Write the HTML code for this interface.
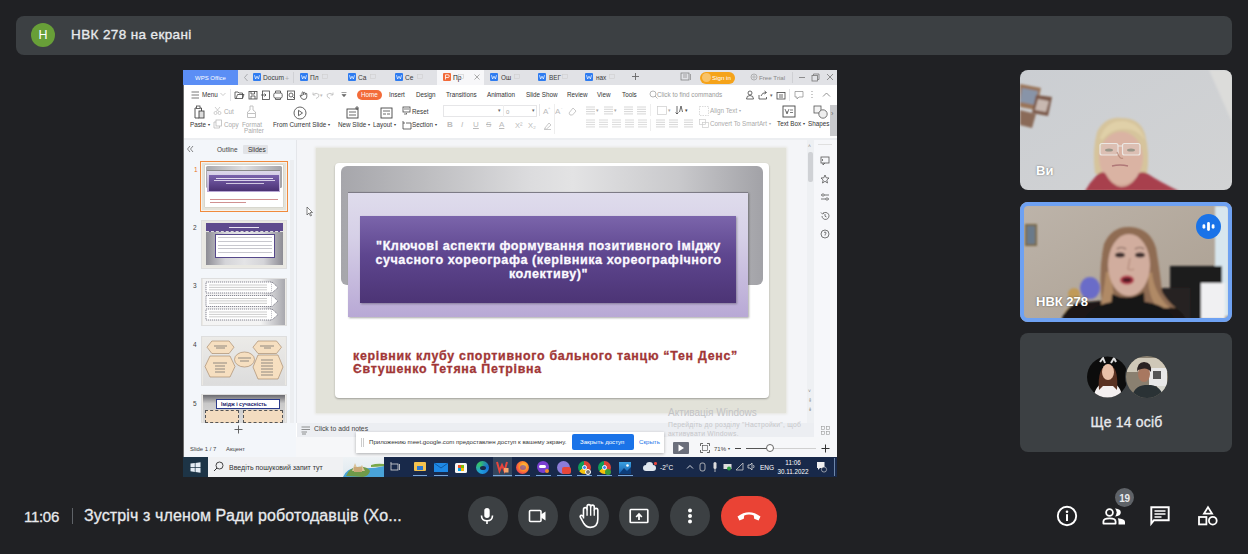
<!DOCTYPE html>
<html><head><meta charset="utf-8">
<style>
*{margin:0;padding:0;box-sizing:border-box}
html,body{width:1248px;height:554px;overflow:hidden;background:#202124;font-family:"Liberation Sans",sans-serif;position:relative}
.a{position:absolute}
.t{white-space:nowrap;line-height:1}
svg.a{overflow:visible}
</style></head><body>
<div class="a" style="left:16px;top:16px;width:1216px;height:39px;background:#3c4043;border-radius:8px"></div>
<div class="a" style="left:31px;top:23px;width:24px;height:24px;background:#689f38;border-radius:50%"></div>
<div class="a t" style="left:-157px;width:400px;text-align:center;top:29.33px;font-size:12.5px;color:#fff;font-weight:normal;">Н</div>
<div class="a t" style="left:71px;top:28.09px;font-size:13.5px;color:#e8eaed;font-weight:normal;font-family:'Liberation Sans',sans-serif;letter-spacing:0.38px;-webkit-text-stroke:0.35px #e8eaed">НВК 278 на екрані</div>
<div class="a" style="left:183px;top:70px;width:654px;height:407px;background:#ffffff;overflow:hidden"></div>
<div class="a" style="left:183px;top:70px;width:654px;height:15px;background:#e1e2e6"></div>
<div class="a" style="left:183px;top:70px;width:55px;height:15px;background:#5b8ef5"></div>
<div class="a t" style="left:195px;top:75.02px;font-size:6px;color:#fff;font-weight:normal;font-family:'Liberation Sans',sans-serif;">WPS Office</div>
<svg class="a" style="left:243px;top:73px;" width="6" height="9" viewBox="0 0 6 9"><path d="M4.5 1 L1.5 4.5 L4.5 8" stroke="#9a9ca0" stroke-width="0.8" fill="none"/></svg>
<div class="a" style="left:253px;top:73px;width:8px;height:8px;background:#2f7cf0;border-radius:1px"></div>
<svg class="a" style="left:253px;top:73px;" width="8" height="8" viewBox="0 0 8 8"><path d="M1.5 2.2 L2.6 6 L4 3.2 L5.4 6 L6.5 2.2" stroke="#fff" stroke-width="0.7" fill="none"/></svg>
<div class="a t" style="left:263px;top:74.82px;font-size:6.6px;color:#3a3a3a;font-weight:normal;font-family:'Liberation Sans',sans-serif;">Docum</div>
<div class="a" style="left:300px;top:73px;width:8px;height:8px;background:#2f7cf0;border-radius:1px"></div>
<svg class="a" style="left:300px;top:73px;" width="8" height="8" viewBox="0 0 8 8"><path d="M1.5 2.2 L2.6 6 L4 3.2 L5.4 6 L6.5 2.2" stroke="#fff" stroke-width="0.7" fill="none"/></svg>
<div class="a t" style="left:310px;top:74.82px;font-size:6.6px;color:#3a3a3a;font-weight:normal;font-family:'Liberation Sans',sans-serif;">Пл</div>
<svg class="a" style="left:322px;top:74px;" width="7" height="7" viewBox="0 0 7 7"><rect x="0.5" y="0.5" width="5" height="4" fill="none" stroke="#cfcfcf" stroke-width="0.6"/></svg>
<div class="a" style="left:348px;top:73px;width:8px;height:8px;background:#2f7cf0;border-radius:1px"></div>
<svg class="a" style="left:348px;top:73px;" width="8" height="8" viewBox="0 0 8 8"><path d="M1.5 2.2 L2.6 6 L4 3.2 L5.4 6 L6.5 2.2" stroke="#fff" stroke-width="0.7" fill="none"/></svg>
<div class="a t" style="left:358px;top:74.82px;font-size:6.6px;color:#3a3a3a;font-weight:normal;font-family:'Liberation Sans',sans-serif;">Са</div>
<svg class="a" style="left:370px;top:74px;" width="7" height="7" viewBox="0 0 7 7"><rect x="0.5" y="0.5" width="5" height="4" fill="none" stroke="#cfcfcf" stroke-width="0.6"/></svg>
<div class="a" style="left:395px;top:73px;width:8px;height:8px;background:#2f7cf0;border-radius:1px"></div>
<svg class="a" style="left:395px;top:73px;" width="8" height="8" viewBox="0 0 8 8"><path d="M1.5 2.2 L2.6 6 L4 3.2 L5.4 6 L6.5 2.2" stroke="#fff" stroke-width="0.7" fill="none"/></svg>
<div class="a t" style="left:405px;top:74.82px;font-size:6.6px;color:#3a3a3a;font-weight:normal;font-family:'Liberation Sans',sans-serif;">Се</div>
<svg class="a" style="left:417px;top:74px;" width="7" height="7" viewBox="0 0 7 7"><rect x="0.5" y="0.5" width="5" height="4" fill="none" stroke="#cfcfcf" stroke-width="0.6"/></svg>
<div class="a" style="left:293px;top:72px;width:1px;height:11px;background:#d0d1d5"></div>
<div class="a t" style="left:285px;top:74.69px;font-size:7px;color:#aaa;font-weight:normal;font-family:'Liberation Sans',sans-serif;">+</div>
<div class="a" style="left:437px;top:70px;width:47px;height:15px;background:#f7f7f9"></div>
<div class="a" style="left:443px;top:73px;width:8px;height:8px;background:#f26b3a;border-radius:1px"></div>
<svg class="a" style="left:443px;top:73px;" width="8" height="8" viewBox="0 0 8 8"><path d="M2.5 6.5 V1.8 H5 Q6.3 1.8 6.3 3.2 Q6.3 4.5 5 4.5 H2.5" stroke="#fff" stroke-width="0.8" fill="none"/></svg>
<div class="a t" style="left:453px;top:74.82px;font-size:6.6px;color:#222;font-weight:normal;font-family:'Liberation Sans',sans-serif;">Пр</div>
<svg class="a" style="left:458px;top:74px;" width="7" height="7" viewBox="0 0 7 7"><rect x="0.5" y="0.5" width="5" height="4" fill="none" stroke="#ccc" stroke-width="0.6"/></svg>
<svg class="a" style="left:473px;top:73px;" width="8" height="8" viewBox="0 0 8 8"><path d="M1.5 1.5 L6.5 6.5 M6.5 1.5 L1.5 6.5" stroke="#888" stroke-width="0.7"/></svg>
<div class="a" style="left:490px;top:73px;width:8px;height:8px;background:#2f7cf0;border-radius:1px"></div>
<svg class="a" style="left:490px;top:73px;" width="8" height="8" viewBox="0 0 8 8"><path d="M1.5 2.2 L2.6 6 L4 3.2 L5.4 6 L6.5 2.2" stroke="#fff" stroke-width="0.7" fill="none"/></svg>
<div class="a t" style="left:501px;top:74.99px;font-size:6.4px;color:#3a3a3a;font-weight:normal;font-family:'Liberation Sans',sans-serif;">Ош</div>
<svg class="a" style="left:514px;top:74px;" width="7" height="7" viewBox="0 0 7 7"><rect x="0.5" y="0.5" width="5" height="4" fill="none" stroke="#cfcfcf" stroke-width="0.6"/></svg>
<div class="a" style="left:538px;top:73px;width:8px;height:8px;background:#2f7cf0;border-radius:1px"></div>
<svg class="a" style="left:538px;top:73px;" width="8" height="8" viewBox="0 0 8 8"><path d="M1.5 2.2 L2.6 6 L4 3.2 L5.4 6 L6.5 2.2" stroke="#fff" stroke-width="0.7" fill="none"/></svg>
<div class="a t" style="left:549px;top:74.99px;font-size:6.4px;color:#3a3a3a;font-weight:normal;font-family:'Liberation Sans',sans-serif;">ВЕГ</div>
<svg class="a" style="left:562px;top:74px;" width="7" height="7" viewBox="0 0 7 7"><rect x="0.5" y="0.5" width="5" height="4" fill="none" stroke="#cfcfcf" stroke-width="0.6"/></svg>
<div class="a" style="left:585px;top:73px;width:8px;height:8px;background:#2f7cf0;border-radius:1px"></div>
<svg class="a" style="left:585px;top:73px;" width="8" height="8" viewBox="0 0 8 8"><path d="M1.5 2.2 L2.6 6 L4 3.2 L5.4 6 L6.5 2.2" stroke="#fff" stroke-width="0.7" fill="none"/></svg>
<div class="a t" style="left:596px;top:74.99px;font-size:6.4px;color:#3a3a3a;font-weight:normal;font-family:'Liberation Sans',sans-serif;">нах</div>
<svg class="a" style="left:609px;top:74px;" width="7" height="7" viewBox="0 0 7 7"><rect x="0.5" y="0.5" width="5" height="4" fill="none" stroke="#cfcfcf" stroke-width="0.6"/></svg>
<svg class="a" style="left:631px;top:72px;" width="9" height="9" viewBox="0 0 9 9"><path d="M4.5 1 V8 M1 4.5 H8" stroke="#666" stroke-width="0.9"/></svg>
<svg class="a" style="left:680px;top:72px;" width="12" height="10" viewBox="0 0 12 10"><rect x="1" y="1" width="8" height="7" fill="none" stroke="#777" stroke-width="0.7"/><path d="M3 3h4M3 5h4M10.5 2v6" stroke="#777" stroke-width="0.6"/></svg>
<div class="a" style="left:700px;top:71.5px;width:35px;height:12px;background:#f5a31a;border-radius:6px"></div>
<div class="a" style="left:702px;top:73px;width:9px;height:9px;background:#f8c36a;border-radius:50%"></div>
<div class="a t" style="left:712px;top:75.35px;font-size:6.2px;color:#fff;font-weight:normal;font-family:'Liberation Sans',sans-serif;">Sign in</div>
<svg class="a" style="left:750px;top:73px;" width="8" height="8" viewBox="0 0 8 8"><circle cx="4" cy="4" r="3" fill="none" stroke="#999" stroke-width="0.7"/><circle cx="4" cy="4" r="1.2" fill="none" stroke="#999" stroke-width="0.6"/></svg>
<div class="a t" style="left:759px;top:74.85px;font-size:6.2px;color:#888;font-weight:normal;font-family:'Liberation Sans',sans-serif;">Free Trial</div>
<div class="a" style="left:792px;top:72px;width:1px;height:11px;background:#cfd0d4"></div>
<svg class="a" style="left:798px;top:73px;" width="8" height="8" viewBox="0 0 8 8"><path d="M1 4.5 H7" stroke="#777" stroke-width="0.8"/></svg>
<svg class="a" style="left:811px;top:73px;" width="9" height="9" viewBox="0 0 9 9"><rect x="1" y="2.5" width="5.5" height="5.5" fill="none" stroke="#777" stroke-width="0.8"/><path d="M2.5 2.5 V1 H8 V6.5 H6.5" fill="none" stroke="#777" stroke-width="0.8"/></svg>
<svg class="a" style="left:826px;top:73px;" width="8" height="8" viewBox="0 0 8 8"><path d="M1 1 L7 7 M7 1 L1 7" stroke="#777" stroke-width="0.8"/></svg>
<div class="a" style="left:183px;top:85px;width:654px;height:52px;background:#ffffff"></div>
<svg class="a" style="left:191px;top:91px;" width="9" height="8" viewBox="0 0 9 8"><path d="M0.5 1 H8 M0.5 4 H8 M0.5 7 H8" stroke="#555" stroke-width="0.8"/></svg>
<div class="a t" style="left:202px;top:92.27px;font-size:6.3px;color:#333;font-weight:normal;font-family:'Liberation Sans',sans-serif;">Menu</div>
<svg class="a" style="left:220px;top:92px;" width="6" height="5" viewBox="0 0 6 5"><path d="M0.5 1 L3 3.5 L5.5 1" stroke="#aaa" stroke-width="0.6" fill="none"/></svg>
<div class="a" style="left:230px;top:89px;width:1px;height:12px;background:#e4e5e8"></div>
<svg class="a" style="left:234px;top:90px;" width="11" height="10" viewBox="0 0 11 10"><path d="M1 8.5 V2 H4 L5 3 H8.5 V8.5 Z M2 8.5 L3.5 4.5 H10 L8.5 8.5" fill="none" stroke="#444" stroke-width="0.8"/></svg>
<svg class="a" style="left:248px;top:90px;" width="10" height="10" viewBox="0 0 10 10"><rect x="1" y="1.5" width="8" height="7.5" fill="none" stroke="#444" stroke-width="0.8"/><path d="M3 9 V6 H7 V9 M3 1.5 V4 H6.5 V1.5" fill="none" stroke="#444" stroke-width="0.8"/></svg>
<svg class="a" style="left:261px;top:90px;" width="10" height="10" viewBox="0 0 10 10"><rect x="1.5" y="1" width="7" height="8.5" fill="none" stroke="#444" stroke-width="0.8"/><path d="M0 5 H5 M3.5 3.5 L5 5 L3.5 6.5" fill="none" stroke="#444" stroke-width="0.8"/></svg>
<svg class="a" style="left:273px;top:90px;" width="10" height="10" viewBox="0 0 10 10"><rect x="0.8" y="3" width="8.4" height="5" rx="1.5" fill="none" stroke="#444" stroke-width="0.8"/><path d="M2.5 3 V1 H7.5 V3 M2.5 8 V9.5 H7.5 V8" fill="none" stroke="#444" stroke-width="0.8"/></svg>
<svg class="a" style="left:286px;top:90px;" width="10" height="10" viewBox="0 0 10 10"><rect x="1.5" y="1" width="7" height="8.5" fill="none" stroke="#444" stroke-width="0.8"/><circle cx="5" cy="5" r="2" fill="none" stroke="#444" stroke-width="0.8"/><path d="M6.5 6.5 L8.5 8.5" fill="none" stroke="#444" stroke-width="0.8"/></svg>
<svg class="a" style="left:299px;top:89.5px;" width="10" height="11" viewBox="0 0 10 11"><path d="M3 6 V2.5 Q3.8 1.3 4.6 2.5 V5 M4.6 3 Q5.4 1.8 6.2 3 V5 M6.2 3.5 Q7 2.5 7.8 3.7 V7 Q7.5 9.5 5 9.5 Q3 9.5 2 7.5 L1 5.5 Q1.5 4.8 3 6" fill="none" stroke="#444" stroke-width="0.8"/></svg>
<svg class="a" style="left:311px;top:90px;" width="10" height="10" viewBox="0 0 10 10"><path d="M2 4.5 Q5 2 8 4.5 Q8.5 7.5 5 8.5 M2 2.5 V5 H4.5" fill="none" stroke="#bbb" stroke-width="0.8"/></svg>
<div class="a t" style="left:320px;top:92.85px;font-size:5px;color:#bbb;font-weight:normal;font-family:'Liberation Sans',sans-serif;">▾</div>
<svg class="a" style="left:325px;top:90px;" width="10" height="10" viewBox="0 0 10 10"><path d="M8 4.5 Q5 2 2 4.5 Q1.5 7.5 5 8.5 M8 2.5 V5 H5.5" fill="none" stroke="#bbb" stroke-width="0.8"/></svg>
<svg class="a" style="left:340px;top:90px;" width="8" height="10" viewBox="0 0 8 10"><path d="M1.5 2.5 H6.5 M2 4.5 L4 6.8 L6 4.5 Z" fill="#666" stroke="#666" stroke-width="0.6"/></svg>
<div class="a" style="left:357px;top:90px;width:25px;height:10px;background:#f36b39;border-radius:5px"></div>
<div class="a t" style="left:361px;top:92.07px;font-size:6.3px;color:#fff;font-weight:normal;font-family:'Liberation Sans',sans-serif;">Home</div>
<div class="a t" style="left:389px;top:92.07px;font-size:6.3px;color:#333;font-weight:normal;font-family:'Liberation Sans',sans-serif;">Insert</div>
<div class="a t" style="left:416px;top:92.07px;font-size:6.3px;color:#333;font-weight:normal;font-family:'Liberation Sans',sans-serif;">Design</div>
<div class="a t" style="left:446px;top:92.07px;font-size:6.3px;color:#333;font-weight:normal;font-family:'Liberation Sans',sans-serif;">Transitions</div>
<div class="a t" style="left:487px;top:92.07px;font-size:6.3px;color:#333;font-weight:normal;font-family:'Liberation Sans',sans-serif;">Animation</div>
<div class="a t" style="left:526px;top:92.07px;font-size:6.3px;color:#333;font-weight:normal;font-family:'Liberation Sans',sans-serif;">Slide Show</div>
<div class="a t" style="left:567px;top:92.07px;font-size:6.3px;color:#333;font-weight:normal;font-family:'Liberation Sans',sans-serif;">Review</div>
<div class="a t" style="left:597px;top:92.07px;font-size:6.3px;color:#333;font-weight:normal;font-family:'Liberation Sans',sans-serif;">View</div>
<div class="a t" style="left:622px;top:92.07px;font-size:6.3px;color:#333;font-weight:normal;font-family:'Liberation Sans',sans-serif;">Tools</div>
<svg class="a" style="left:649px;top:90px;" width="9" height="9" viewBox="0 0 9 9"><circle cx="4" cy="4" r="3" fill="none" stroke="#999" stroke-width="0.7"/><path d="M6 6 L8.5 8.5" stroke="#999" stroke-width="0.7"/></svg>
<div class="a t" style="left:657px;top:91.77px;font-size:6.3px;color:#999;font-weight:normal;font-family:'Liberation Sans',sans-serif;">Click to find commands</div>
<svg class="a" style="left:745px;top:90px;" width="10" height="10" viewBox="0 0 10 10"><path d="M1.5 9 Q1.5 5.5 5 5.5 Q8.5 5.5 8.5 9 Z" fill="none" stroke="#444" stroke-width="0.8"/><circle cx="5" cy="3" r="2" fill="none" stroke="#444" stroke-width="0.8"/></svg>
<svg class="a" style="left:758px;top:90px;" width="11" height="10" viewBox="0 0 11 10"><path d="M1 5 V9 H8.5 V7 M3 6 Q4 2.5 8 2.5 M6.5 1 L8.5 2.5 L6.5 4" fill="none" stroke="#444" stroke-width="0.8"/></svg>
<div class="a t" style="left:770px;top:92.85px;font-size:5px;color:#666;font-weight:normal;font-family:'Liberation Sans',sans-serif;">▾</div>
<svg class="a" style="left:776px;top:90px;" width="10" height="10" viewBox="0 0 10 10"><rect x="1" y="2.5" width="8" height="6.5" fill="none" stroke="#444" stroke-width="0.8"/><path d="M3 5 H7 M3 7 H7" fill="none" stroke="#444" stroke-width="0.8"/></svg>
<div class="a" style="left:789px;top:89px;width:1px;height:12px;background:#e4e5e8"></div>
<svg class="a" style="left:794px;top:90px;" width="10" height="10" viewBox="0 0 10 10"><path d="M1 1.5 H9 V7 H5 L3 9 V7 H1 Z" fill="none" stroke="#888" stroke-width="0.7"/></svg>
<svg class="a" style="left:810px;top:90px;" width="4" height="10" viewBox="0 0 4 10"><circle cx="2" cy="1.5" r="0.6" fill="#888"/><circle cx="2" cy="4.5" r="0.6" fill="#888"/><circle cx="2" cy="7.5" r="0.6" fill="#888"/></svg>
<svg class="a" style="left:822px;top:90px;" width="10" height="10" viewBox="0 0 10 10"><path d="M1 6.5 L4.5 3 L8 6.5" fill="none" stroke="#777" stroke-width="0.8"/></svg>
<svg class="a" style="left:193px;top:105px;" width="12" height="14" viewBox="0 0 12 14"><path d="M2 3 H3.5 M7 3 H8.5 V6 M2 3 V13 H6" fill="none" stroke="#444" stroke-width="0.9"/><rect x="3.5" y="1" width="3.5" height="2.5" fill="none" stroke="#444" stroke-width="0.8"/><rect x="6" y="6" width="5" height="7" fill="#ddd" stroke="#444" stroke-width="0.9"/></svg>
<div class="a t" style="left:190px;top:122.27px;font-size:6.3px;color:#333;font-weight:normal;font-family:'Liberation Sans',sans-serif;">Paste<span style="font-size:3.8px;vertical-align:1.6px;margin-left:1.6px">▾</span></div>
<svg class="a" style="left:213px;top:106px;" width="9" height="9" viewBox="0 0 9 9"><circle cx="2.5" cy="7" r="1.5" fill="none" stroke="#bbb" stroke-width="0.7"/><circle cx="6.5" cy="7" r="1.5" fill="none" stroke="#bbb" stroke-width="0.7"/><path d="M2 1 L6 5.8 M7 1 L3 5.8" stroke="#bbb" stroke-width="0.7"/></svg>
<div class="a t" style="left:224px;top:109.27px;font-size:6.3px;color:#aaa;font-weight:normal;font-family:'Liberation Sans',sans-serif;">Cut</div>
<svg class="a" style="left:213px;top:119px;" width="10" height="10" viewBox="0 0 10 10"><rect x="3" y="1" width="5.5" height="6" fill="none" stroke="#bbb" stroke-width="0.8"/><path d="M3 3 H1 V9 H6.5 V7" fill="none" stroke="#bbb" stroke-width="0.8"/></svg>
<div class="a t" style="left:224px;top:122.27px;font-size:6.3px;color:#aaa;font-weight:normal;font-family:'Liberation Sans',sans-serif;">Copy</div>
<svg class="a" style="left:246px;top:105px;" width="11" height="14" viewBox="0 0 11 14"><path d="M4 1 H7 V5 L9.5 7 V8.5 H1.5 V7 L4 5 Z M1.5 8.5 V12.5 H9.5 V8.5" fill="none" stroke="#bbb" stroke-width="0.9"/></svg>
<div class="a t" style="left:242px;top:122.27px;font-size:6.3px;color:#aaa;font-weight:normal;font-family:'Liberation Sans',sans-serif;">Format</div>
<div class="a t" style="left:244px;top:128.27px;font-size:6.3px;color:#aaa;font-weight:normal;font-family:'Liberation Sans',sans-serif;">Painter</div>
<svg class="a" style="left:293px;top:106px;" width="14" height="14" viewBox="0 0 14 14"><circle cx="7" cy="7" r="6" fill="none" stroke="#555" stroke-width="0.9"/><path d="M5.5 4.3 V9.7 L9.5 7 Z" fill="none" stroke="#555" stroke-width="0.9"/></svg>
<div class="a t" style="left:273px;top:122.27px;font-size:6.3px;color:#333;font-weight:normal;font-family:'Liberation Sans',sans-serif;">From Current Slide<span style="font-size:3.8px;vertical-align:1.6px;margin-left:1.6px">▾</span></div>
<svg class="a" style="left:346px;top:106px;" width="14" height="14" viewBox="0 0 14 14"><rect x="1" y="3" width="11" height="9" fill="none" stroke="#444" stroke-width="0.9"/><path d="M3 6 H10 M3 9 H10 M11 0 V4 M9 2 H13" stroke="#444" stroke-width="0.8"/></svg>
<div class="a t" style="left:338px;top:122.27px;font-size:6.3px;color:#333;font-weight:normal;font-family:'Liberation Sans',sans-serif;">New Slide<span style="font-size:3.8px;vertical-align:1.6px;margin-left:1.6px">▾</span></div>
<svg class="a" style="left:380px;top:106px;" width="14" height="14" viewBox="0 0 14 14"><rect x="1" y="2" width="11" height="10" fill="none" stroke="#444" stroke-width="0.9"/><path d="M3 5 H10 M3 8 H6 M7 8 H10" stroke="#444" stroke-width="0.8"/></svg>
<div class="a t" style="left:373px;top:122.27px;font-size:6.3px;color:#333;font-weight:normal;font-family:'Liberation Sans',sans-serif;">Layout<span style="font-size:3.8px;vertical-align:1.6px;margin-left:1.6px">▾</span></div>
<svg class="a" style="left:402px;top:106px;" width="9" height="9" viewBox="0 0 9 9"><rect x="1" y="1" width="7" height="5" fill="none" stroke="#444" stroke-width="0.8"/><path d="M2 3 H7 M2 8 H5 L4 7" stroke="#444" stroke-width="0.7" fill="none"/></svg>
<div class="a t" style="left:412px;top:109.27px;font-size:6.3px;color:#333;font-weight:normal;font-family:'Liberation Sans',sans-serif;">Reset</div>
<svg class="a" style="left:402px;top:120px;" width="10" height="10" viewBox="0 0 10 10"><path d="M1 1 V3 H3 M1 3 V9 H9 V3 H4" fill="none" stroke="#444" stroke-width="0.8"/></svg>
<div class="a t" style="left:412px;top:122.27px;font-size:6.3px;color:#333;font-weight:normal;font-family:'Liberation Sans',sans-serif;">Section<span style="font-size:3.8px;vertical-align:1.6px;margin-left:1.6px">▾</span></div>
<div class="a" style="left:443px;top:104.5px;width:94px;height:12px;border:1px solid #e6e6e8;background:#fff"></div>
<div class="a" style="left:503px;top:104.5px;width:1px;height:12px;background:#eee"></div>
<div class="a t" style="left:498px;top:109.27px;font-size:4.5px;color:#666;font-weight:normal;font-family:'Liberation Sans',sans-serif;">▾</div>
<div class="a t" style="left:506px;top:108.52px;font-size:6px;color:#aaa;font-weight:normal;font-family:'Liberation Sans',sans-serif;">0</div>
<div class="a t" style="left:532px;top:109.27px;font-size:4.5px;color:#666;font-weight:normal;font-family:'Liberation Sans',sans-serif;">▾</div>
<div class="a" style="left:539px;top:104px;width:1px;height:12px;background:#e6e6e8"></div>
<div class="a t" style="left:543px;top:107.86px;font-size:8px;color:#bbb;font-weight:normal;font-family:'Liberation Sans',sans-serif;">A</div>
<div class="a t" style="left:548px;top:105.68px;font-size:4px;color:#bbb;font-weight:normal;font-family:'Liberation Sans',sans-serif;">+</div>
<div class="a t" style="left:555px;top:107.86px;font-size:8px;color:#bbb;font-weight:normal;font-family:'Liberation Sans',sans-serif;">A</div>
<div class="a t" style="left:561px;top:105.68px;font-size:4px;color:#bbb;font-weight:normal;font-family:'Liberation Sans',sans-serif;">-</div>
<svg class="a" style="left:567px;top:106px;" width="10" height="10" viewBox="0 0 10 10"><path d="M2 7 L6 2 L9 5 L5.5 9 H3 Z" fill="none" stroke="#bbb" stroke-width="0.8"/></svg>
<div class="a t" style="left:447px;top:121.36px;font-size:8px;color:#bbb;font-weight:normal;font-family:'Liberation Sans',sans-serif;font-weight:bold">B</div>
<div class="a t" style="left:461px;top:121.36px;font-size:8px;color:#bbb;font-weight:normal;font-family:'Liberation Sans',sans-serif;font-style:italic">I</div>
<div class="a t" style="left:473px;top:121.36px;font-size:8px;color:#bbb;font-weight:normal;font-family:'Liberation Sans',sans-serif;text-decoration:underline">U</div>
<div class="a t" style="left:486px;top:121.36px;font-size:8px;color:#bbb;font-weight:normal;font-family:'Liberation Sans',sans-serif;text-decoration:line-through">S</div>
<div class="a t" style="left:499px;top:121.36px;font-size:8px;color:#bbb;font-weight:normal;font-family:'Liberation Sans',sans-serif;text-decoration:underline">A</div>
<div class="a t" style="left:515px;top:121.78px;font-size:7.5px;color:#bbb;font-weight:normal;font-family:'Liberation Sans',sans-serif;">X²</div>
<div class="a t" style="left:528px;top:121.78px;font-size:7.5px;color:#bbb;font-weight:normal;font-family:'Liberation Sans',sans-serif;">X₂</div>
<svg class="a" style="left:543px;top:120px;" width="10" height="10" viewBox="0 0 10 10"><path d="M1.5 8.5 L6 3 L8 5 L3.5 9 Z M1 9.5 H8" fill="none" stroke="#bbb" stroke-width="0.8"/></svg>
<div class="a" style="left:554px;top:104px;width:1px;height:30px;background:#eee"></div>
<svg class="a" style="left:586px;top:106px;" width="9" height="10" viewBox="0 0 9 10"><path d="M0 1.0 H9" stroke="#ccc" stroke-width="0.8"/><path d="M0 3.3 H9" stroke="#ccc" stroke-width="0.8"/><path d="M0 5.6 H9" stroke="#ccc" stroke-width="0.8"/><path d="M0 7.9 H9" stroke="#ccc" stroke-width="0.8"/></svg>
<div class="a t" style="left:596px;top:109.27px;font-size:4.5px;color:#aaa;font-weight:normal;font-family:'Liberation Sans',sans-serif;">▾</div>
<svg class="a" style="left:604px;top:106px;" width="9" height="10" viewBox="0 0 9 10"><path d="M0 1.0 H9" stroke="#ccc" stroke-width="0.8"/><path d="M0 3.3 H9" stroke="#ccc" stroke-width="0.8"/><path d="M0 5.6 H9" stroke="#ccc" stroke-width="0.8"/><path d="M0 7.9 H9" stroke="#ccc" stroke-width="0.8"/></svg>
<div class="a t" style="left:614px;top:109.27px;font-size:4.5px;color:#aaa;font-weight:normal;font-family:'Liberation Sans',sans-serif;">▾</div>
<svg class="a" style="left:624px;top:106px;" width="9" height="10" viewBox="0 0 9 10"><path d="M0 1.0 H9" stroke="#ccc" stroke-width="0.8"/><path d="M0 3.3 H9" stroke="#ccc" stroke-width="0.8"/><path d="M0 5.6 H9" stroke="#ccc" stroke-width="0.8"/><path d="M0 7.9 H9" stroke="#ccc" stroke-width="0.8"/></svg>
<svg class="a" style="left:637px;top:106px;" width="9" height="10" viewBox="0 0 9 10"><path d="M0 1.0 H9" stroke="#ccc" stroke-width="0.8"/><path d="M0 3.3 H9" stroke="#ccc" stroke-width="0.8"/><path d="M0 5.6 H9" stroke="#ccc" stroke-width="0.8"/><path d="M0 7.9 H9" stroke="#ccc" stroke-width="0.8"/></svg>
<div class="a" style="left:650px;top:104px;width:1px;height:12px;background:#eee"></div>
<svg class="a" style="left:657px;top:106px;" width="10" height="10" viewBox="0 0 10 10"><rect x="0.5" y="0.5" width="9" height="8" fill="none" stroke="#ccc" stroke-width="0.7"/></svg>
<div class="a t" style="left:668px;top:109.27px;font-size:4.5px;color:#aaa;font-weight:normal;font-family:'Liberation Sans',sans-serif;">▾</div>
<svg class="a" style="left:675px;top:105px;" width="10" height="10" viewBox="0 0 10 10"><path d="M2 1 V9 M0.5 7.5 L2 9 L3.5 7.5 M6 1 L4.5 7 M6 1 L7.5 7" stroke="#444" stroke-width="0.8" fill="none"/></svg>
<div class="a t" style="left:685px;top:109.27px;font-size:4.5px;color:#444;font-weight:normal;font-family:'Liberation Sans',sans-serif;">▾</div>
<svg class="a" style="left:699px;top:106px;" width="10" height="10" viewBox="0 0 10 10"><rect x="0.5" y="0.5" width="9" height="9" fill="none" stroke="#ccc" stroke-width="0.7" stroke-dasharray="1.5 1"/></svg>
<div class="a t" style="left:710px;top:108.27px;font-size:6.3px;color:#aaa;font-weight:normal;font-family:'Liberation Sans',sans-serif;">Align Text<span style="font-size:3.8px;vertical-align:1.6px;margin-left:1.6px">▾</span></div>
<svg class="a" style="left:586px;top:119px;" width="9" height="10" viewBox="0 0 9 10"><path d="M0 1.0 H9" stroke="#d0d0d0" stroke-width="0.8"/><path d="M0 3.3 H9" stroke="#d0d0d0" stroke-width="0.8"/><path d="M0 5.6 H9" stroke="#d0d0d0" stroke-width="0.8"/><path d="M0 7.9 H9" stroke="#d0d0d0" stroke-width="0.8"/></svg>
<svg class="a" style="left:599px;top:119px;" width="9" height="10" viewBox="0 0 9 10"><path d="M0 1.0 H9" stroke="#d0d0d0" stroke-width="0.8"/><path d="M0 3.3 H9" stroke="#d0d0d0" stroke-width="0.8"/><path d="M0 5.6 H9" stroke="#d0d0d0" stroke-width="0.8"/><path d="M0 7.9 H9" stroke="#d0d0d0" stroke-width="0.8"/></svg>
<svg class="a" style="left:612px;top:119px;" width="9" height="10" viewBox="0 0 9 10"><path d="M0 1.0 H9" stroke="#d0d0d0" stroke-width="0.8"/><path d="M0 3.3 H9" stroke="#d0d0d0" stroke-width="0.8"/><path d="M0 5.6 H9" stroke="#d0d0d0" stroke-width="0.8"/><path d="M0 7.9 H9" stroke="#d0d0d0" stroke-width="0.8"/></svg>
<svg class="a" style="left:625px;top:119px;" width="9" height="10" viewBox="0 0 9 10"><path d="M0 1.0 H9" stroke="#d0d0d0" stroke-width="0.8"/><path d="M0 3.3 H9" stroke="#d0d0d0" stroke-width="0.8"/><path d="M0 5.6 H9" stroke="#d0d0d0" stroke-width="0.8"/><path d="M0 7.9 H9" stroke="#d0d0d0" stroke-width="0.8"/></svg>
<svg class="a" style="left:638px;top:119px;" width="9" height="10" viewBox="0 0 9 10"><path d="M0 1.0 H9" stroke="#d0d0d0" stroke-width="0.8"/><path d="M0 3.3 H9" stroke="#d0d0d0" stroke-width="0.8"/><path d="M0 5.6 H9" stroke="#d0d0d0" stroke-width="0.8"/><path d="M0 7.9 H9" stroke="#d0d0d0" stroke-width="0.8"/></svg>
<div class="a" style="left:650px;top:119px;width:1px;height:12px;background:#eee"></div>
<svg class="a" style="left:656px;top:119px;" width="9" height="10" viewBox="0 0 9 10"><path d="M0 1.0 H9" stroke="#ccc" stroke-width="0.8"/><path d="M0 3.3 H9" stroke="#ccc" stroke-width="0.8"/><path d="M0 5.6 H9" stroke="#ccc" stroke-width="0.8"/><path d="M0 7.9 H9" stroke="#ccc" stroke-width="0.8"/></svg>
<svg class="a" style="left:669px;top:119px;" width="9" height="10" viewBox="0 0 9 10"><path d="M0 1.0 H9" stroke="#ccc" stroke-width="0.8"/><path d="M0 3.3 H9" stroke="#ccc" stroke-width="0.8"/><path d="M0 5.6 H9" stroke="#ccc" stroke-width="0.8"/><path d="M0 7.9 H9" stroke="#ccc" stroke-width="0.8"/></svg>
<svg class="a" style="left:684px;top:119px;" width="9" height="10" viewBox="0 0 9 10"><path d="M0 1.0 H9" stroke="#ccc" stroke-width="0.8"/><path d="M0 3.3 H9" stroke="#ccc" stroke-width="0.8"/><path d="M0 5.6 H9" stroke="#ccc" stroke-width="0.8"/><path d="M0 7.9 H9" stroke="#ccc" stroke-width="0.8"/></svg>
<svg class="a" style="left:699px;top:119px;" width="10" height="10" viewBox="0 0 10 10"><rect x="0.5" y="0.5" width="6" height="5" fill="none" stroke="#ccc" stroke-width="0.7"/><rect x="3.5" y="3.5" width="6" height="5" fill="none" stroke="#ccc" stroke-width="0.7"/></svg>
<div class="a t" style="left:710px;top:121.27px;font-size:6.3px;color:#aaa;font-weight:normal;font-family:'Liberation Sans',sans-serif;">Convert To SmartArt<span style="font-size:3.8px;vertical-align:1.6px;margin-left:1.6px">▾</span></div>
<svg class="a" style="left:782px;top:105px;" width="14" height="13" viewBox="0 0 14 13"><rect x="1" y="1" width="12" height="11" fill="none" stroke="#444" stroke-width="0.9"/><path d="M3 4 L5 9 L7 4 M4 7 H6 M8 5 H11 M8 7.5 H11" stroke="#444" stroke-width="0.7" fill="none"/></svg>
<div class="a t" style="left:777px;top:121.27px;font-size:6.3px;color:#333;font-weight:normal;font-family:'Liberation Sans',sans-serif;">Text Box<span style="font-size:3.8px;vertical-align:1.6px;margin-left:1.6px">▾</span></div>
<svg class="a" style="left:813px;top:105px;" width="15" height="14" viewBox="0 0 15 14"><rect x="1" y="1" width="7" height="7" fill="#f4f4f4" stroke="#555" stroke-width="0.8"/><circle cx="10" cy="9" r="4.2" fill="#eee" stroke="#555" stroke-width="0.8"/></svg>
<div class="a t" style="left:808px;top:121.27px;font-size:6.3px;color:#333;font-weight:normal;font-family:'Liberation Sans',sans-serif;">Shapes</div>
<div class="a" style="left:830px;top:105px;width:7px;height:31px;background:#c9cacd"></div>
<div class="a t" style="left:831px;top:110.19px;font-size:7px;color:#666;font-weight:normal;font-family:'Liberation Sans',sans-serif;">›</div>
<div class="a" style="left:183px;top:137.5px;width:654px;height:2.5px;background:#eceef1"></div>
<div class="a" style="left:183px;top:140px;width:113px;height:297px;background:#f3f6fa"></div>
<div class="a" style="left:296px;top:140px;width:1px;height:283px;background:#e4e6ea"></div>
<svg class="a" style="left:186px;top:145px;" width="8" height="8" viewBox="0 0 8 8"><path d="M4 1 L1.5 4 L4 7 M7 1 L4.5 4 L7 7" stroke="#555" stroke-width="0.7" fill="none"/></svg>
<div class="a t" style="left:217px;top:146.60px;font-size:6.5px;color:#444;font-weight:normal;font-family:'Liberation Sans',sans-serif;">Outline</div>
<div class="a" style="left:243px;top:145px;width:25px;height:9px;background:#e1e3e7;border-radius:1px"></div>
<div class="a t" style="left:248px;top:146.60px;font-size:6.5px;color:#333;font-weight:normal;font-family:'Liberation Sans',sans-serif;">Slides</div>
<div class="a" style="left:290px;top:160px;width:4px;height:263px;background:#eceef1"></div>
<div class="a t" style="left:194px;top:167.10px;font-size:6.5px;color:#e8731e;font-weight:normal;font-family:'Liberation Sans',sans-serif;">1</div>
<div class="a" style="left:200px;top:161px;width:88px;height:51px;border:1px solid #f08a3c;background:#f6f3ee"></div>
<div class="a" style="left:202px;top:163px;width:84px;height:47px;background:#e4e3da"></div>
<div class="a" style="left:205px;top:165px;width:78px;height:42px;background:#fff;box-shadow:0 0 1px rgba(0,0,0,.3)"></div>
<div class="a" style="left:206px;top:166px;width:76px;height:22px;background:linear-gradient(90deg,#a9a9ad,#e0e0e2,#a5a5a9);border-radius:1.5px"></div>
<div class="a" style="left:207px;top:170px;width:73px;height:22px;background:linear-gradient(180deg,#dcd7ea,#b7a6d4);border-top:0.5px solid #888"></div>
<div class="a" style="left:209px;top:175px;width:70px;height:16px;background:linear-gradient(180deg,#7a62ad,#4b3274)"></div>
<div class="a" style="left:216px;top:178px;width:57px;height:0.8px;background:#e4def0"></div>
<div class="a" style="left:214px;top:180.3px;width:61px;height:0.8px;background:#d8d0e8"></div>
<div class="a" style="left:226px;top:182.6px;width:38px;height:0.8px;background:#d0c6e0"></div>
<div class="a" style="left:210px;top:198.5px;width:68px;height:0.8px;background:#d09090"></div>
<div class="a" style="left:210px;top:201.5px;width:36px;height:0.8px;background:#d09090"></div>
<div class="a t" style="left:193px;top:224.60px;font-size:6.5px;color:#444;font-weight:normal;font-family:'Liberation Sans',sans-serif;">2</div>
<div class="a" style="left:201px;top:220px;width:86px;height:49px;background:#ebe9e4;border:1px solid #dedede"></div>
<div class="a" style="left:203px;top:221px;width:82px;height:46px;background:#e9e8e2"></div>
<div class="a" style="left:206px;top:223px;width:77px;height:42px;background:linear-gradient(90deg,#8d8c94,#d4d4d8 25%,#e4e4e6 50%,#d4d4d8 75%,#8d8c94)"></div>
<div class="a" style="left:206px;top:223px;width:77px;height:9px;background:#5e4a8e;border-bottom:1px dashed #ddd"></div>
<div class="a" style="left:229px;top:226.5px;width:30px;height:1.5px;background:#e8e2f2"></div>
<div class="a" style="left:215px;top:234px;width:60px;height:24px;background:#fff;border:1px solid #56488a"></div>
<div class="a" style="left:218px;top:237.0px;width:54px;height:0.7px;background:#c8c8ce"></div>
<div class="a" style="left:218px;top:240.8px;width:54px;height:0.7px;background:#c8c8ce"></div>
<div class="a" style="left:218px;top:244.6px;width:54px;height:0.7px;background:#c8c8ce"></div>
<div class="a" style="left:218px;top:248.4px;width:54px;height:0.7px;background:#c8c8ce"></div>
<div class="a" style="left:218px;top:252.2px;width:54px;height:0.7px;background:#c8c8ce"></div>
<div class="a t" style="left:193px;top:282.61px;font-size:6.5px;color:#444;font-weight:normal;font-family:'Liberation Sans',sans-serif;">3</div>
<div class="a" style="left:201px;top:278px;width:86px;height:48px;background:#ebe9e4;border:1px solid #dedede"></div>
<div class="a" style="left:203px;top:279px;width:82px;height:46px;background:linear-gradient(90deg,#f4f4f4,#f4f4f4 70%,#a8a8ae)"></div>
<svg class="a" style="left:205px;top:281px;" width="75" height="42" viewBox="0 0 75 42"><rect x="1" y="1.0" width="66" height="11" fill="#fff" stroke="#556" stroke-width="0.7" stroke-dasharray="1.2 0.8"/><path d="M67 1.0 L73 6.5 L67 12.0" fill="#fff" stroke="#556" stroke-width="0.7" stroke-dasharray="1.2 0.8"/><path d="M4 4.0 H62" stroke="#aaa" stroke-width="0.6"/><path d="M4 6.4 H62" stroke="#aaa" stroke-width="0.6"/><path d="M4 8.8 H62" stroke="#aaa" stroke-width="0.6"/><rect x="1" y="14.5" width="66" height="11" fill="#fff" stroke="#556" stroke-width="0.7" stroke-dasharray="1.2 0.8"/><path d="M67 14.5 L73 20.0 L67 25.5" fill="#fff" stroke="#556" stroke-width="0.7" stroke-dasharray="1.2 0.8"/><path d="M4 17.5 H62" stroke="#aaa" stroke-width="0.6"/><path d="M4 19.9 H62" stroke="#aaa" stroke-width="0.6"/><path d="M4 22.3 H62" stroke="#aaa" stroke-width="0.6"/><rect x="1" y="28.0" width="66" height="11" fill="#fff" stroke="#556" stroke-width="0.7" stroke-dasharray="1.2 0.8"/><path d="M67 28.0 L73 33.5 L67 39.0" fill="#fff" stroke="#556" stroke-width="0.7" stroke-dasharray="1.2 0.8"/><path d="M4 31.0 H62" stroke="#aaa" stroke-width="0.6"/><path d="M4 33.4 H62" stroke="#aaa" stroke-width="0.6"/><path d="M4 35.8 H62" stroke="#aaa" stroke-width="0.6"/></svg>
<div class="a t" style="left:193px;top:341.61px;font-size:6.5px;color:#444;font-weight:normal;font-family:'Liberation Sans',sans-serif;">4</div>
<div class="a" style="left:201px;top:336px;width:86px;height:50px;background:#ebe9e4;border:1px solid #dedede"></div>
<div class="a" style="left:203px;top:337px;width:82px;height:48px;background:linear-gradient(180deg,#ecebe8,#dcdcdc)"></div>
<svg class="a" style="left:203px;top:337px;" width="82" height="48" viewBox="0 0 82 48"><path d="M8.9 4.0 H26.1 L31.0 10.2 L26.1 16.5 H8.9 L4.0 10.2 Z" fill="#f6dfc0" stroke="#a08060" stroke-width="0.6"/><path d="M7.0 19.0 H27.0 L32.0 29.5 L27.0 40.0 H7.0 L2.0 29.5 Z" fill="#f6dfc0" stroke="#a08060" stroke-width="0.6"/><path d="M55.0 4.0 H73.5 L78.5 10.2 L73.5 16.5 H55.0 L50.0 10.2 Z" fill="#f6dfc0" stroke="#a08060" stroke-width="0.6"/><path d="M55.0 18.0 H75.0 L80.0 30.0 L75.0 42.0 H55.0 L50.0 30.0 Z" fill="#f6dfc0" stroke="#a08060" stroke-width="0.6"/><ellipse cx="41.5" cy="22.5" rx="10" ry="7.5" fill="#f6dfc0" stroke="#a08060" stroke-width="0.6"/><path d="M11 9 H24" stroke="#666" stroke-width="0.7"/><path d="M13 11 H22" stroke="#666" stroke-width="0.7"/><path d="M57 9 H71" stroke="#666" stroke-width="0.7"/><path d="M61 11 H68" stroke="#666" stroke-width="0.7"/><path d="M10 26 H24" stroke="#666" stroke-width="0.7"/><path d="M12 29 H22" stroke="#666" stroke-width="0.7"/><path d="M12 32 H22" stroke="#666" stroke-width="0.7"/><path d="M12 35 H22" stroke="#666" stroke-width="0.7"/><path d="M35 21 H48" stroke="#666" stroke-width="0.7"/><path d="M37 24 H46" stroke="#666" stroke-width="0.7"/><path d="M58 23 H70" stroke="#666" stroke-width="0.7"/><path d="M58 26 H70" stroke="#666" stroke-width="0.7"/><path d="M58 29 H70" stroke="#666" stroke-width="0.7"/><path d="M58 32 H70" stroke="#666" stroke-width="0.7"/><path d="M58 35 H70" stroke="#666" stroke-width="0.7"/><path d="M58 38 H70" stroke="#666" stroke-width="0.7"/></svg>
<div class="a t" style="left:193px;top:400.61px;font-size:6.5px;color:#444;font-weight:normal;font-family:'Liberation Sans',sans-serif;">5</div>
<div class="a" style="left:201px;top:394px;width:86px;height:29px;background:#ebe9e4;border:1px solid #dedede"></div>
<div class="a" style="left:203px;top:395px;width:82px;height:28px;background:linear-gradient(180deg,#6a6a70,#c8c8c8 30%,#ddd)"></div>
<div class="a" style="left:216px;top:399px;width:64px;height:10px;background:#fff;border:1px solid #2a3a8a"></div>
<div class="a t" style="left:221px;top:402.18px;font-size:5.2px;color:#22226a;font-weight:bold;font-family:'Liberation Sans',sans-serif;">Імідж і сучасність</div>
<div class="a" style="left:205px;top:410px;width:34px;height:13px;background:#f3dcc0;border:0.7px dashed #555"></div>
<div class="a" style="left:243px;top:410px;width:40px;height:13px;background:#f3dcc0;border:0.7px dashed #555"></div>
<div class="a" style="left:183px;top:423px;width:113px;height:14px;background:#f3f6fa"></div>
<svg class="a" style="left:234px;top:425px;" width="9" height="9" viewBox="0 0 9 9"><path d="M4.5 0.5 V8.5 M0.5 4.5 H8.5" stroke="#555" stroke-width="0.9"/></svg>
<div class="a" style="left:297px;top:140px;width:510px;height:283px;background:#f4f5f8"></div>
<div class="a" style="left:316px;top:148px;width:470px;height:265px;background:#e2e2d9;box-shadow:0 0 2px 1px rgba(226,226,217,.8)"></div>
<div class="a" style="left:335px;top:163px;width:434px;height:235px;background:#fff;border-radius:4px;box-shadow:0 1px 2px rgba(0,0,0,.3)"></div>
<div class="a" style="left:341px;top:166px;width:422px;height:119px;background:linear-gradient(90deg,#a6a6ab 0%,#bdbdc0 20%,#dcdcde 45%,#e3e3e4 55%,#c9c9cc 80%,#a2a2a7 100%);border-radius:6px"></div>
<div class="a" style="left:348px;top:192px;width:400px;height:125px;background:linear-gradient(180deg,#dfdcec 0%,#d6d0e7 35%,#b8a8d5 100%);border-top:1px solid #7d7b85;box-shadow:1px 1px 2px rgba(0,0,0,.35)"></div>
<div class="a" style="left:360px;top:216px;width:376px;height:87px;background:linear-gradient(180deg,#7b65ab 0%,#5e468f 45%,#4c3475 100%);box-shadow:1px 1px 2px rgba(0,0,0,.3)"></div>
<div class="a t" style="left:348.5px;width:400px;text-align:center;top:239.54px;font-size:12.6px;color:#fbf9ff;font-weight:bold;letter-spacing:0.55px;-webkit-text-stroke:0.3px #fbf9ff">&quot;Ключові аспекти формування позитивного іміджу</div>
<div class="a t" style="left:348.5px;width:400px;text-align:center;top:253.54px;font-size:12.6px;color:#fbf9ff;font-weight:bold;letter-spacing:0.55px;-webkit-text-stroke:0.3px #fbf9ff">сучасного хореографа (керівника хореографічного</div>
<div class="a t" style="left:348.5px;width:400px;text-align:center;top:268.04px;font-size:12.6px;color:#fbf9ff;font-weight:bold;letter-spacing:0.55px;-webkit-text-stroke:0.3px #fbf9ff">колективу)&quot;</div>
<div class="a t" style="left:353px;top:349.71px;font-size:12.4px;color:#a13636;font-weight:bold;font-family:'Liberation Sans',sans-serif;letter-spacing:0.72px;-webkit-text-stroke:0.3px #a13636">керівник клубу спортивного бального танцю “Тен Денс”</div>
<div class="a t" style="left:353px;top:363.21px;font-size:12.4px;color:#a13636;font-weight:bold;font-family:'Liberation Sans',sans-serif;letter-spacing:0.72px;-webkit-text-stroke:0.3px #a13636">Євтушенко Тетяна Петрівна</div>
<svg class="a" style="left:306px;top:206px;" width="7" height="11" viewBox="0 0 7 11"><path d="M1 1 V9 L3 7 L4.5 10 L5.5 9.5 L4.2 6.5 H6.5 Z" fill="#fff" stroke="#333" stroke-width="0.6"/></svg>
<div class="a" style="left:807px;top:140px;width:7px;height:283px;background:#eef0f3"></div>
<div class="a" style="left:808px;top:152px;width:5px;height:30px;background:#cfd1d5;border-radius:2px"></div>
<div class="a t" style="left:808px;top:143.85px;font-size:5px;color:#888;font-weight:normal;font-family:'Liberation Sans',sans-serif;">˄</div>
<div class="a" style="left:814px;top:140px;width:23px;height:297px;background:#f6f7fa"></div>
<div class="a" style="left:818px;top:144px;width:14px;height:1px;background:#e0e0e0"></div>
<svg class="a" style="left:820px;top:156px;" width="10" height="10" viewBox="0 0 10 10"><rect x="1" y="1" width="8" height="6" fill="none" stroke="#555" stroke-width="0.8"/><path d="M3 7 L3 9 L5 7" fill="none" stroke="#555" stroke-width="0.8"/><path d="M2.5 3 V5" fill="none" stroke="#555" stroke-width="0.8"/></svg>
<svg class="a" style="left:820px;top:174px;" width="10" height="10" viewBox="0 0 10 10"><path d="M5 1 L6.2 3.8 L9 4 L6.8 6 L7.5 9 L5 7.3 L2.5 9 L3.2 6 L1 4 L3.8 3.8 Z" fill="none" stroke="#555" stroke-width="0.8"/></svg>
<svg class="a" style="left:820px;top:192px;" width="10" height="10" viewBox="0 0 10 10"><path d="M1 3 H9 M1 7 H9" fill="none" stroke="#555" stroke-width="0.8"/><circle cx="3" cy="3" r="1.2" fill="#fff" stroke="#555" stroke-width="0.7"/><circle cx="7" cy="7" r="1.2" fill="#fff" stroke="#555" stroke-width="0.7"/></svg>
<svg class="a" style="left:820px;top:211px;" width="10" height="10" viewBox="0 0 10 10"><path d="M2 5 A3.5 3.5 0 1 0 3 2.5 M1 1.5 L2.5 3 L4 1.8 M5 3 V5.2 L6.5 6" fill="none" stroke="#555" stroke-width="0.8"/></svg>
<svg class="a" style="left:820px;top:229px;" width="10" height="10" viewBox="0 0 10 10"><circle cx="5" cy="5" r="4" fill="none" stroke="#555" stroke-width="0.8"/><path d="M4 3.5 Q5 2.5 6 3.5 Q6.5 4.8 5 5.5 V6.5" fill="none" stroke="#555" stroke-width="0.8"/></svg>
<div class="a t" style="left:808px;top:388.85px;font-size:5px;color:#888;font-weight:normal;font-family:'Liberation Sans',sans-serif;">˅</div>
<div class="a t" style="left:808px;top:397.85px;font-size:5px;color:#999;font-weight:normal;font-family:'Liberation Sans',sans-serif;">⇞</div>
<div class="a t" style="left:808px;top:406.85px;font-size:5px;color:#999;font-weight:normal;font-family:'Liberation Sans',sans-serif;">⇟</div>
<svg class="a" style="left:821px;top:426px;" width="9" height="9" viewBox="0 0 9 9"><rect x="0.5" y="0.5" width="3" height="3" fill="none" stroke="#999" stroke-width="0.6"/><rect x="5.5" y="0.5" width="3" height="3" fill="none" stroke="#999" stroke-width="0.6"/><rect x="0.5" y="5.5" width="3" height="3" fill="none" stroke="#999" stroke-width="0.6"/><rect x="5.5" y="5.5" width="3" height="3" fill="none" stroke="#999" stroke-width="0.6"/></svg>
<div class="a" style="left:297px;top:423px;width:517px;height:16px;background:#eceef2"></div>
<svg class="a" style="left:301px;top:426px;" width="10" height="9" viewBox="0 0 10 9"><path d="M0.5 1 H9 M0.5 3.5 H9 M0.5 6 H6 M1 8 H5" stroke="#666" stroke-width="0.7"/></svg>
<div class="a t" style="left:314px;top:426.36px;font-size:6.8px;color:#444;font-weight:normal;font-family:'Liberation Sans',sans-serif;">Click to add notes</div>
<div class="a t" style="left:668px;top:408.20px;font-size:10px;color:#c2c3c6;font-weight:normal;font-family:'Liberation Sans',sans-serif;">Активація Windows</div>
<div class="a t" style="left:668px;top:421.86px;font-size:6.8px;color:#c6c7ca;font-weight:normal;font-family:'Liberation Sans',sans-serif;letter-spacing:0.25px">Перейдіть до розділу &quot;Настройки&quot;, щоб</div>
<div class="a t" style="left:668px;top:431.36px;font-size:6.8px;color:#c6c7ca;font-weight:normal;font-family:'Liberation Sans',sans-serif;letter-spacing:0.25px">активувати Windows.</div>
<div class="a" style="left:183px;top:437px;width:654px;height:20px;background:#f6f7f9"></div>
<div class="a" style="left:183px;top:437px;width:113px;height:20px;background:#f3f6fa"></div>
<div class="a t" style="left:190px;top:446.60px;font-size:5.9px;color:#444;font-weight:normal;font-family:'Liberation Sans',sans-serif;">Slide 1 / 7</div>
<div class="a t" style="left:226px;top:446.60px;font-size:5.9px;color:#444;font-weight:normal;font-family:'Liberation Sans',sans-serif;">Акцент</div>
<div class="a" style="left:673px;top:442px;width:16px;height:12px;background:#6b6f7b;border-radius:1px"></div>
<svg class="a" style="left:677px;top:444px;" width="8" height="8" viewBox="0 0 8 8"><path d="M1.5 0.5 L7 4 L1.5 7.5 Z" fill="#fff"/></svg>
<svg class="a" style="left:700px;top:443px;" width="10" height="10" viewBox="0 0 10 10"><path d="M0.5 3 V0.5 H3 M7 0.5 H9.5 V3 M9.5 7 V9.5 H7 M3 9.5 H0.5 V7" stroke="#444" stroke-width="0.8" fill="none"/><rect x="2.5" y="2.5" width="5" height="5" fill="none" stroke="#444" stroke-width="0.6"/></svg>
<div class="a t" style="left:714px;top:446.02px;font-size:6px;color:#444;font-weight:normal;font-family:'Liberation Sans',sans-serif;">71%<span style="font-size:3.6px;vertical-align:1.5px;margin-left:1.5px">▾</span></div>
<div class="a" style="left:735px;top:448px;width:6px;height:1px;background:#444"></div>
<div class="a" style="left:746px;top:448px;width:24px;height:1px;background:#555"></div>
<div class="a" style="left:770px;top:448px;width:46px;height:0.6px;background:#d0d0d0"></div>
<div class="a" style="left:766px;top:444px;width:8px;height:8px;background:#fff;border:1px solid #666;border-radius:50%"></div>
<svg class="a" style="left:821px;top:444px;" width="9" height="9" viewBox="0 0 9 9"><path d="M4.5 0.5 V8.5 M0.5 4.5 H8.5" stroke="#333" stroke-width="1"/></svg>
<div class="a" style="left:356px;top:432px;width:308px;height:21px;background:#fff;box-shadow:0 1px 3px rgba(0,0,0,.3)"></div>
<div class="a" style="left:361px;top:438px;width:1px;height:9px;background:#ccc"></div>
<div class="a" style="left:363px;top:438px;width:1px;height:9px;background:#ccc"></div>
<div class="a t" style="left:369px;top:439.44px;font-size:6.1px;color:#333;font-weight:normal;font-family:'Liberation Sans',sans-serif;">Приложению meet.google.com предоставлен доступ к вашему экрану.</div>
<div class="a" style="left:572px;top:434px;width:62px;height:16px;background:#1a73e8;border-radius:2px"></div>
<div class="a t" style="left:580px;top:439.44px;font-size:6.1px;color:#fff;font-weight:normal;font-family:'Liberation Sans',sans-serif;">Закрыть доступ</div>
<div class="a t" style="left:639px;top:439.44px;font-size:6.1px;color:#1a73e8;font-weight:normal;font-family:'Liberation Sans',sans-serif;">Скрыть</div>
<div class="a" style="left:183px;top:457px;width:654px;height:20px;background:#18294a"></div>
<div class="a" style="left:183px;top:457px;width:25px;height:20px;background:#1d3446"></div>
<svg class="a" style="left:190px;top:462px;" width="11" height="11" viewBox="0 0 11 11"><path d="M0.5 1.6 L4.8 1 V5.1 H0.5 Z M5.5 0.9 L10.5 0.2 V5.1 H5.5 Z M0.5 5.8 H4.8 V9.9 L0.5 9.3 Z M5.5 5.8 H10.5 V10.8 L5.5 10.1 Z" fill="#e6eef5"/></svg>
<div class="a" style="left:208px;top:457px;width:176px;height:20px;background:#f0f1f3"></div>
<svg class="a" style="left:213px;top:461px;" width="11" height="11" viewBox="0 0 11 11"><circle cx="6.5" cy="4.5" r="3.5" fill="none" stroke="#333" stroke-width="0.9"/><path d="M4 7 L1 10" stroke="#333" stroke-width="1"/></svg>
<div class="a t" style="left:229px;top:464.19px;font-size:7px;color:#333;font-weight:normal;font-family:'Liberation Sans',sans-serif;">Введіть пошуковий запит тут</div>
<svg class="a" style="left:343px;top:457px;" width="41" height="20" viewBox="0 0 41 20"><defs><linearGradient id="sky" x1="0" y1="0" x2="0" y2="1"><stop offset="0" stop-color="#eef2f5"/><stop offset="1" stop-color="#dfe9ef"/></linearGradient><filter id="ib"><feGaussianBlur stdDeviation="0.5"/></filter></defs><rect width="41" height="20" fill="url(#sky)"/><g filter="url(#ib)"><path d="M0 20 Q4 10 16 11 Q30 12 41 9 V20 Z" fill="#4aa3d8"/><path d="M3 19 Q6 11 14 10 Q24 9 27 14 Q26 19 20 20 Z" fill="#6f9a4a"/><path d="M9 14 L12 6 L15 13 L19 8 L22 14 Z" fill="#d9c39a"/><rect x="11" y="10" width="8" height="5" fill="#c9a878"/><path d="M28 8 Q34 6 41 7 V9 Q34 10 28 10 Z" fill="#7aa84a"/></g></svg>
<svg class="a" style="left:390px;top:462px;" width="11" height="10" viewBox="0 0 11 10"><rect x="1" y="2" width="7" height="6" fill="none" stroke="#ddd" stroke-width="0.8"/><path d="M9.5 2 V8 M0 1 H2" stroke="#ddd" stroke-width="0.8"/></svg>
<div class="a" style="left:414px;top:462px;width:12px;height:9px;background:#f2c14e;border-radius:1px"></div>
<div class="a" style="left:417px;top:466px;width:6px;height:4px;background:#2b78d0"></div>
<div class="a" style="left:413px;top:475px;width:14px;height:1px;background:#78a6d8"></div>
<div class="a" style="left:434px;top:463px;width:14px;height:9px;background:#1e88e5"></div>
<svg class="a" style="left:434px;top:463px;" width="14" height="9" viewBox="0 0 14 9"><path d="M0 0 L7 5 L14 0" stroke="#0d5aa7" stroke-width="1" fill="none"/></svg>
<div class="a" style="left:434px;top:475px;width:14px;height:1px;background:#78a6d8"></div>
<div class="a" style="left:455px;top:463px;width:12px;height:10px;background:#f5f5f5;border-radius:1.5px"></div>
<div class="a" style="left:458px;top:465px;width:2.5px;height:2.5px;background:#f25022"></div>
<div class="a" style="left:461px;top:465px;width:2.5px;height:2.5px;background:#7fba00"></div>
<div class="a" style="left:458px;top:468px;width:2.5px;height:2.5px;background:#00a4ef"></div>
<div class="a" style="left:461px;top:468px;width:2.5px;height:2.5px;background:#ffb900"></div>
<div class="a" style="left:476px;top:461px;width:13px;height:13px;background:conic-gradient(from 200deg,#1f9de0,#37c467,#1a6fd0,#1f9de0);border-radius:50%"></div>
<div class="a" style="left:480px;top:466px;width:6px;height:4px;background:#18294a;border-radius:50%"></div>
<div class="a" style="left:493px;top:457px;width:19px;height:20px;background:#34465e"></div>
<svg class="a" style="left:496px;top:461px;" width="13" height="12" viewBox="0 0 13 12"><path d="M1 1 L3.5 10 L6 4 L8.5 10 L11 1" stroke="#e8453c" stroke-width="2" fill="none"/><rect x="8" y="7" width="4.5" height="4.5" fill="#f5a26a"/></svg>
<div class="a" style="left:493px;top:475px;width:19px;height:1.2px;background:#79a8d8"></div>
<div class="a" style="left:516px;top:461px;width:13px;height:13px;background:radial-gradient(circle at 60% 40%,#ffcf3d 0%,#ff8a2b 40%,#e53258 80%);border-radius:50%"></div>
<div class="a" style="left:520px;top:465px;width:6px;height:5px;background:#6d3fb4;border-radius:50%;opacity:.6"></div>
<div class="a" style="left:515px;top:475px;width:15px;height:1px;background:#78a6d8"></div>
<div class="a" style="left:537px;top:461px;width:12px;height:12px;background:#7a3fd0;border-radius:50%"></div>
<div class="a" style="left:539px;top:465px;width:7px;height:3px;background:#fff;border-radius:2px"></div>
<div class="a" style="left:545px;top:469px;width:4px;height:4px;background:#f08a2a;border-radius:50%"></div>
<div class="a" style="left:536px;top:475px;width:15px;height:1px;background:#78a6d8"></div>
<div class="a" style="left:557px;top:461px;width:13px;height:13px;background:#8c7cd8;border-radius:50%"></div>
<div class="a" style="left:562px;top:467px;width:9px;height:7px;background:#e8473a;border-radius:2px"></div>
<div class="a" style="left:557px;top:475px;width:15px;height:1px;background:#78a6d8"></div>
<div class="a" style="left:578px;top:461px;width:13px;height:13px;background:conic-gradient(#db4437 0 33%,#f4c20d 0 66%,#0f9d58 0);border-radius:50%"></div>
<div class="a" style="left:582px;top:465px;width:5px;height:5px;background:#4285f4;border:1px solid #fff;border-radius:50%"></div>
<div class="a" style="left:585px;top:469px;width:6px;height:6px;background:#777;border:1px solid #fff;border-radius:50%"></div>
<div class="a" style="left:577px;top:475px;width:15px;height:1px;background:#78a6d8"></div>
<div class="a" style="left:598px;top:461px;width:13px;height:13px;background:conic-gradient(#db4437 0 33%,#f4c20d 0 66%,#0f9d58 0);border-radius:50%"></div>
<div class="a" style="left:602px;top:465px;width:5px;height:5px;background:#4285f4;border:1px solid #fff;border-radius:50%"></div>
<div class="a" style="left:605px;top:469px;width:6px;height:6px;background:#3b9c3b;border-radius:50%"></div>
<div class="a" style="left:597px;top:475px;width:15px;height:1px;background:#78a6d8"></div>
<div class="a" style="left:619px;top:462px;width:12px;height:12px;background:linear-gradient(180deg,#3aa0e0,#1660b0)"></div>
<svg class="a" style="left:619px;top:462px;" width="12" height="12" viewBox="0 0 12 12"><path d="M0 12 L5 6 L8 9 L12 5 V12 Z" fill="#0d3d7a"/><circle cx="8.5" cy="3.5" r="1.3" fill="#fff"/></svg>
<div class="a" style="left:618px;top:475px;width:15px;height:1px;background:#78a6d8"></div>
<div class="a" style="left:643px;top:465px;width:13px;height:6px;background:#dfe6ef;border-radius:4px"></div>
<div class="a" style="left:646px;top:462px;width:7px;height:6px;background:#dfe6ef;border-radius:50%"></div>
<div class="a" style="left:654px;top:462px;width:2.5px;height:2.5px;background:#e8453c;border-radius:50%"></div>
<div class="a t" style="left:660px;top:464.61px;font-size:6.5px;color:#fff;font-weight:normal;font-family:'Liberation Sans',sans-serif;">-2°C</div>
<svg class="a" style="left:686px;top:464px;" width="8" height="6" viewBox="0 0 8 6"><path d="M1 4.5 L4 1.5 L7 4.5" stroke="#fff" stroke-width="0.8" fill="none"/></svg>
<svg class="a" style="left:699px;top:462px;" width="7" height="11" viewBox="0 0 7 11"><rect x="1" y="1" width="5" height="8" rx="2" fill="none" stroke="#ccc" stroke-width="0.8"/></svg>
<svg class="a" style="left:712px;top:461px;" width="6" height="12" viewBox="0 0 6 12"><rect x="1.5" y="1" width="3" height="7" rx="1.5" fill="#ddd"/><path d="M3 8 V11" stroke="#ddd" stroke-width="0.8"/></svg>
<svg class="a" style="left:723px;top:463px;" width="9" height="8" viewBox="0 0 9 8"><rect x="0.5" y="1" width="8" height="5" fill="#ddd"/><circle cx="6" cy="5.5" r="2" fill="#2ea043"/></svg>
<svg class="a" style="left:735px;top:462px;" width="9" height="9" viewBox="0 0 9 9"><path d="M1 8 L8 1 V8 Z" fill="none" stroke="#ccc" stroke-width="0.8"/></svg>
<svg class="a" style="left:747px;top:462px;" width="9" height="9" viewBox="0 0 9 9"><path d="M1 3 H3 L5 1 V8 L3 6 H1 Z M6.5 3 Q7.5 4.5 6.5 6" fill="none" stroke="#ddd" stroke-width="0.8"/></svg>
<div class="a t" style="left:760px;top:465.11px;font-size:6.5px;color:#fff;font-weight:normal;font-family:'Liberation Sans',sans-serif;">ENG</div>
<div class="a t" style="left:593px;width:400px;text-align:center;top:460.27px;font-size:6.3px;color:#fff;font-weight:normal;">11:06</div>
<div class="a t" style="left:593px;width:400px;text-align:center;top:468.77px;font-size:6.3px;color:#fff;font-weight:normal;">30.11.2022</div>
<svg class="a" style="left:816px;top:461px;" width="11" height="12" viewBox="0 0 11 12"><path d="M1 1 H8.5 V7 H4 L2 9 V7 H1 Z" fill="#f0f0f0"/><circle cx="8" cy="8.5" r="2.6" fill="#18294a" stroke="#ddd" stroke-width="0.6"/></svg>
<div class="a" style="left:834px;top:458px;width:1px;height:18px;background:#6d86aa"></div>
<div class="a" style="left:183px;top:85px;width:1px;height:372px;background:#6a6a6a"></div>
<svg class="a" style="left:1020px;top:70px;" width="212" height="120" viewBox="0 0 212 120">
<defs>
 <clipPath id="c1"><rect x="0" y="0" width="212" height="120" rx="8"/></clipPath>
 <filter id="bl1" x="-20%" y="-20%" width="140%" height="140%"><feGaussianBlur stdDeviation="1"/></filter>
 <linearGradient id="w1" x1="0" y1="0" x2="1" y2="1"><stop offset="0" stop-color="#cbced2"/><stop offset="1" stop-color="#d2d3d4"/></linearGradient>
</defs>
<g clip-path="url(#c1)">
 <rect width="212" height="120" fill="url(#w1)"/>
 <path d="M189 0 H212 V52 Z" fill="#dcdcda" filter="url(#bl1)"/>
 <g filter="url(#bl1)">
  <path d="M0 14 L21 18 L16 40 L0 37 Z" fill="#9a7458"/>
  <path d="M2 18 L18 21 L15 35 L0 32 Z" fill="#8894a8"/>
  <path d="M16 25 L32 27 L28 46 L12 43 Z" fill="#7a5848"/>
  <path d="M18 29 L29 31 L26 42 L15 40 Z" fill="#c8b8b0"/>
  <path d="M0 40 L16 44 L12 58 L0 55 Z" fill="#8a6a58"/>
 </g>
 <g filter="url(#bl1)">
  <path d="M75 104 Q72 80 77 62 Q85 46 102 48 Q120 48 125 64 Q130 84 127 104 Z" fill="#d6c49c"/>
  <rect x="86" y="96" width="30" height="26" fill="#d2a898"/>
  <ellipse cx="101" cy="88" rx="22" ry="26.5" fill="#dab3a3"/>
  <path d="M80 68 Q86 50 104 51 Q120 53 125 70 Q116 58 104 59 Q92 58 82 70 Z" fill="#e0d0a8"/>
  <path d="M65 121 Q70 112 77 105 Q81 101 85 103 Q92 116 101 117 Q112 117 119 103 Q124 101 128 104 Q140 112 159 121 Z" fill="#a83f4e"/>
 </g>
 <rect x="80" y="73.5" width="18" height="11.5" rx="2" fill="#e0d8d0" fill-opacity="0.35" stroke="#ece8e4" stroke-width="1.2"/>
 <rect x="102.5" y="73.5" width="17.5" height="11.5" rx="2" fill="#e0d8d0" fill-opacity="0.35" stroke="#ece8e4" stroke-width="1.2"/>
 <path d="M98 76 H102.5" stroke="#ece8e4" stroke-width="1"/>
 <ellipse cx="89" cy="80" rx="4" ry="1.6" fill="#6a7a6a" opacity="0.6"/>
 <ellipse cx="111" cy="80" rx="4" ry="1.6" fill="#6a7a6a" opacity="0.6"/>
 <path d="M97 82 Q100 90 103 88" stroke="#b08070" stroke-width="1.2" fill="none" opacity="0.7"/>
 <path d="M92 96 Q100 94 108 96" stroke="#b07878" stroke-width="1.5" fill="none"/>
</g></svg>
<div class="a t" style="left:1036px;top:163.71px;font-size:13px;color:#fff;font-weight:bold;font-family:'Liberation Sans',sans-serif;text-shadow:0 0 2px rgba(0,0,0,.5)">Ви</div>
<svg class="a" style="left:1020px;top:202px;" width="212" height="120" viewBox="0 0 212 120">
<defs>
 <clipPath id="c2"><rect x="0" y="0" width="212" height="120" rx="8"/></clipPath>
 <filter id="bl2" x="-20%" y="-20%" width="140%" height="140%"><feGaussianBlur stdDeviation="1.2"/></filter>
 <linearGradient id="w2" x1="0" y1="0" x2="1" y2="1"><stop offset="0" stop-color="#bdb4aa"/><stop offset="1" stop-color="#aa9e90"/></linearGradient>
</defs>
<g clip-path="url(#c2)">
 <rect width="212" height="120" fill="url(#w2)"/>
 <g filter="url(#bl2)">
  <rect x="195" y="4" width="14" height="110" fill="#d8e6ee"/>
  <rect x="5" y="22" width="12" height="22" fill="#7a6a48"/>
  <rect x="7" y="24" width="8" height="18" fill="#6a7a8a"/>
  <rect x="150" y="64" width="52" height="60" fill="#1a1a1c"/>
  <rect x="181" y="81" width="24" height="36" fill="#f0f0f2"/>
  <path d="M128 86 H170 V124 H128 Z" fill="#252220"/>
  <ellipse cx="70" cy="86" rx="10" ry="11" fill="#6a6cc8"/>
  <ellipse cx="54" cy="92" rx="6" ry="6" fill="#c09a58"/>
  <ellipse cx="60" cy="112" rx="16" ry="10" fill="#e8c890" opacity="0.8"/>
  <path d="M40 124 Q44 100 66 100 L90 98 L130 98 Q160 100 170 124 Z" fill="#1c1816"/>
  <path d="M82 102 Q78 70 84 42 Q92 24 110 25 Q130 26 136 46 Q140 70 142 90 Q148 100 156 106 L128 104 L92 104 Q86 106 76 108 Z" fill="#8f6c52"/>
  <path d="M80 106 Q84 90 86 70 L92 70 Q92 92 96 104 Z" fill="#b08a66"/>
  <path d="M132 70 Q134 92 150 106 L138 106 Q128 96 128 72 Z" fill="#b08a66"/>
  <ellipse cx="109" cy="63" rx="21" ry="31" fill="#d1ad9e"/>
  <path d="M92 92 Q108 100 124 90 L126 124 H90 Z" fill="#161212"/>
  <path d="M62 124 Q66 104 92 100 L126 100 Q152 104 158 124 Z" fill="#161212"/>
  <ellipse cx="100" cy="53" rx="5" ry="2.5" fill="#3a2c2c"/>
  <ellipse cx="120" cy="53" rx="5" ry="2.5" fill="#3a2c2c"/>
  <path d="M97 47 Q101 44 106 47 M115 47 Q120 44 124 47" stroke="#6a5048" stroke-width="1.2" fill="none"/>
  <path d="M110 56 L108 67 Q111 69 114 67" stroke="#b08878" stroke-width="1.2" fill="none"/>
  <ellipse cx="107" cy="78" rx="7" ry="4.5" fill="#b03848"/>
  <ellipse cx="107" cy="78" rx="4.5" ry="2.2" fill="#4a1c20"/>
 </g>
</g></svg>
<div class="a" style="left:1020px;top:202px;width:212px;height:120px;border-radius:8px;border:4px solid #6ea1f2"></div>
<div class="a" style="left:1196px;top:214px;width:25px;height:25px;background:#1a73e8;border-radius:50%"></div>
<svg class="a" style="left:1196px;top:214px;" width="25" height="25" viewBox="0 0 25 25"><rect x="6.5" y="10.3" width="2.8" height="4.4" rx="1.4" fill="#fff"/><rect x="11.1" y="8" width="2.8" height="9" rx="1.4" fill="#fff"/><rect x="15.7" y="10.3" width="2.8" height="4.4" rx="1.4" fill="#fff"/></svg>
<div class="a t" style="left:1036px;top:295.21px;font-size:13px;color:#fff;font-weight:bold;font-family:'Liberation Sans',sans-serif;text-shadow:0 0 2px rgba(0,0,0,.5)">НВК 278</div>
<div class="a" style="left:1020px;top:333px;width:212px;height:119px;background:#3c4043;border-radius:8px"></div>
<svg class="a" style="left:1087px;top:356px;" width="82" height="42" viewBox="0 0 82 42">
<defs>
 <clipPath id="a1"><circle cx="20.5" cy="21" r="20.5"/></clipPath>
 <clipPath id="a2"><circle cx="60" cy="21" r="21"/></clipPath>
 <filter id="bl3"><feGaussianBlur stdDeviation="0.6"/></filter>
</defs>
<g clip-path="url(#a1)"><rect width="42" height="42" fill="#0c0c0c"/>
 <g filter="url(#bl3)">
 <path d="M6 44 Q8 28 18 27 L24 27 Q34 28 36 44 Z" fill="#f4f0f0"/>
 <path d="M12 34 Q10 12 21 8 Q32 10 30 34 L26 30 L16 30 Z" fill="#5a3020"/>
 <ellipse cx="21" cy="16" rx="6" ry="8" fill="#e8c0a8"/>
 <path d="M13 6 L16 2 L18 7 M24 7 L27 2 L29 6" stroke="#ddd" stroke-width="2" fill="none"/>
 </g>
</g>
<circle cx="60" cy="21" r="22" fill="#3c4043"/>
<g clip-path="url(#a2)"><rect x="38" width="44" height="42" fill="#8a8070"/>
 <g filter="url(#bl3)">
 <rect x="40" y="2" width="42" height="14" fill="#cfc8b8"/>
 <rect x="62" y="12" width="18" height="18" fill="#e8e8e8"/>
 <rect x="66" y="15" width="8" height="8" fill="#555"/>
 <rect x="70" y="30" width="12" height="8" fill="#d8d8d0"/>
 <path d="M44 44 Q46 30 58 29 L64 29 Q74 30 78 44 Z" fill="#2a3236"/>
 <ellipse cx="57" cy="18" rx="6" ry="8" fill="#a87860"/>
 <path d="M50 16 Q50 6 57 6 Q65 6 64 16 Q60 10 51 14 Z" fill="#2a2020"/>
 </g>
</g></svg>
<div class="a t" style="left:926.5px;width:400px;text-align:center;top:415.38px;font-size:14px;color:#e8eaed;font-weight:normal;letter-spacing:0.2px;-webkit-text-stroke:0.3px #e8eaed">Ще 14 осіб</div>
<div class="a t" style="left:24px;top:509.15px;font-size:15px;color:#e8eaed;font-weight:normal;font-family:'Liberation Sans',sans-serif;-webkit-text-stroke:0.3px #e8eaed;letter-spacing:-0.3px">11:06</div>
<div class="a" style="left:71.5px;top:508px;width:1px;height:16px;background:#5f6368"></div>
<div class="a t" style="left:84px;top:508.32px;font-size:16px;color:#e8eaed;font-weight:normal;font-family:'Liberation Sans',sans-serif;-webkit-text-stroke:0.3px #e8eaed;letter-spacing:0.12px">Зустріч з членом Ради роботодавців (Хо...</div>
<div class="a" style="left:468px;top:496px;width:40px;height:40px;background:#3c4043;border-radius:20px"></div>
<div class="a" style="left:518px;top:496px;width:40px;height:40px;background:#3c4043;border-radius:20px"></div>
<div class="a" style="left:569px;top:496px;width:40px;height:40px;background:#3c4043;border-radius:20px"></div>
<div class="a" style="left:619px;top:496px;width:40px;height:40px;background:#3c4043;border-radius:20px"></div>
<div class="a" style="left:670px;top:496px;width:40px;height:40px;background:#3c4043;border-radius:20px"></div>
<div class="a" style="left:721px;top:496px;width:56px;height:40px;background:#ea4335;border-radius:20px"></div>
<svg class="a" style="left:477px;top:506px;" width="20" height="20" viewBox="0 0 20 20"><rect x="7.3" y="2" width="5.4" height="10" rx="2.7" fill="#fff"/><path d="M4.5 9.5 Q4.5 14.8 10 14.8 Q15.5 14.8 15.5 9.5" stroke="#fff" stroke-width="1.6" fill="none"/><path d="M10 14.5 V18" stroke="#fff" stroke-width="1.6"/></svg>
<svg class="a" style="left:527px;top:506px;" width="22" height="20" viewBox="0 0 22 20"><rect x="2.5" y="4.5" width="11.5" height="11" rx="1" stroke="#fff" stroke-width="1.6" fill="none"/><path d="M14 8.5 L18.5 5.5 V14.5 L14 11.5 Z" fill="#fff"/></svg>
<svg class="a" style="left:574px;top:503px;" width="30" height="26" viewBox="0 0 30 26"><g transform="translate(15 13) scale(1.38) translate(-9.5 -10.75)"><path d="M5.5 12.5 V6.2 Q5.5 4.7 6.8 4.7 Q8.1 4.7 8.1 6.2 V4 Q8.1 2.5 9.4 2.5 Q10.7 2.5 10.7 4 V4.3 Q10.7 2.9 12 2.9 Q13.3 2.9 13.3 4.3 V6.5 Q13.3 5.2 14.6 5.2 Q15.9 5.2 15.9 6.5 V13 Q15.9 19 10.5 19 Q7.5 19 5.8 16.2 L3.2 11.6 Q2.8 10.6 3.8 10.3 Q4.6 10.1 5.5 11.4" stroke="#fff" stroke-width="1.15" fill="none" stroke-linejoin="round"/><path d="M8.1 6 V10.5 M10.7 4.3 V10.5 M13.3 6.5 V10.5" stroke="#fff" stroke-width="1"/></g></svg>
<svg class="a" style="left:628px;top:505px;" width="22" height="22" viewBox="0 0 22 22"><rect x="2.2" y="4.5" width="17.6" height="13" rx="0.8" stroke="#fff" stroke-width="1.7" fill="none"/><path d="M11 15 V9.5 M8.2 12 L11 9 L13.8 12" stroke="#fff" stroke-width="1.8" fill="none"/></svg>
<svg class="a" style="left:680px;top:505px;" width="20" height="22" viewBox="0 0 20 22"><circle cx="10" cy="5.5" r="2" fill="#fff"/><circle cx="10" cy="11" r="2" fill="#fff"/><circle cx="10" cy="16.5" r="2" fill="#fff"/></svg>
<svg class="a" style="left:736px;top:509px;" width="26" height="14" viewBox="0 0 26 14"><path d="M1.5 7.5 Q13 -1 24.5 7.5 L22.6 11.5 L18.2 9.8 L17.8 6.6 Q13 4.6 8.2 6.6 L7.8 9.8 L3.4 11.5 Z" fill="#fff"/></svg>
<svg class="a" style="left:1056px;top:505px;" width="22" height="22" viewBox="0 0 22 22"><circle cx="11" cy="11" r="9.2" stroke="#fff" stroke-width="1.9" fill="none"/><circle cx="11" cy="6.8" r="1.3" fill="#fff"/><rect x="10" y="9.2" width="2" height="6.8" fill="#fff"/></svg>
<svg class="a" style="left:1101px;top:506px;" width="26" height="20" viewBox="0 0 26 20"><circle cx="8.5" cy="6.5" r="3.4" stroke="#fff" stroke-width="1.8" fill="none"/><path d="M2.4 17.6 V15.6 Q2.4 12.3 8.5 12.3 Q14.6 12.3 14.6 15.6 V17.6 Z" stroke="#fff" stroke-width="1.8" fill="none" stroke-linejoin="round"/><path d="M14.2 2.6 A4.2 4.2 0 0 1 14.2 10.4 A5.2 5.2 0 0 0 14.2 2.6 Z" fill="#fff"/><path d="M14.2 2.6 Q19.8 3 19.8 6.5 Q19.8 10 14.2 10.4 Q15.8 8.5 15.8 6.5 Q15.8 4.5 14.2 2.6 Z" fill="#fff"/><path d="M16.8 12.2 Q24 12.8 24 16 V18.5 H17.5 V15.6 Q17.5 13.5 16.8 12.2 Z" fill="#fff"/></svg>
<div class="a" style="left:1115px;top:488px;width:19px;height:19px;background:#5f6368;border-radius:50%"></div>
<div class="a t" style="left:924.5px;width:400px;text-align:center;top:493.70px;font-size:10px;color:#e8eaed;font-weight:bold;letter-spacing:-0.2px">19</div>
<svg class="a" style="left:1149px;top:505px;" width="23" height="22" viewBox="0 0 23 22"><path d="M2.3 2.3 H19.7 V15.2 H5 L2.3 18.5 Z" stroke="#fff" stroke-width="1.9" fill="none" stroke-linejoin="miter"/><path d="M5.5 6 H16.5 M5.5 9 H16.5 M5.5 12 H12.5" stroke="#fff" stroke-width="1.6"/></svg>
<svg class="a" style="left:1197px;top:505px;" width="22" height="22" viewBox="0 0 22 22"><path d="M11 2.2 L15 8.6 H7 Z" stroke="#fff" stroke-width="1.8" fill="none" stroke-linejoin="miter"/><rect x="2" y="12" width="7.4" height="7.4" stroke="#fff" stroke-width="1.8" fill="none"/><circle cx="15.8" cy="15.7" r="3.9" stroke="#fff" stroke-width="1.8" fill="none"/></svg>
</body></html>
